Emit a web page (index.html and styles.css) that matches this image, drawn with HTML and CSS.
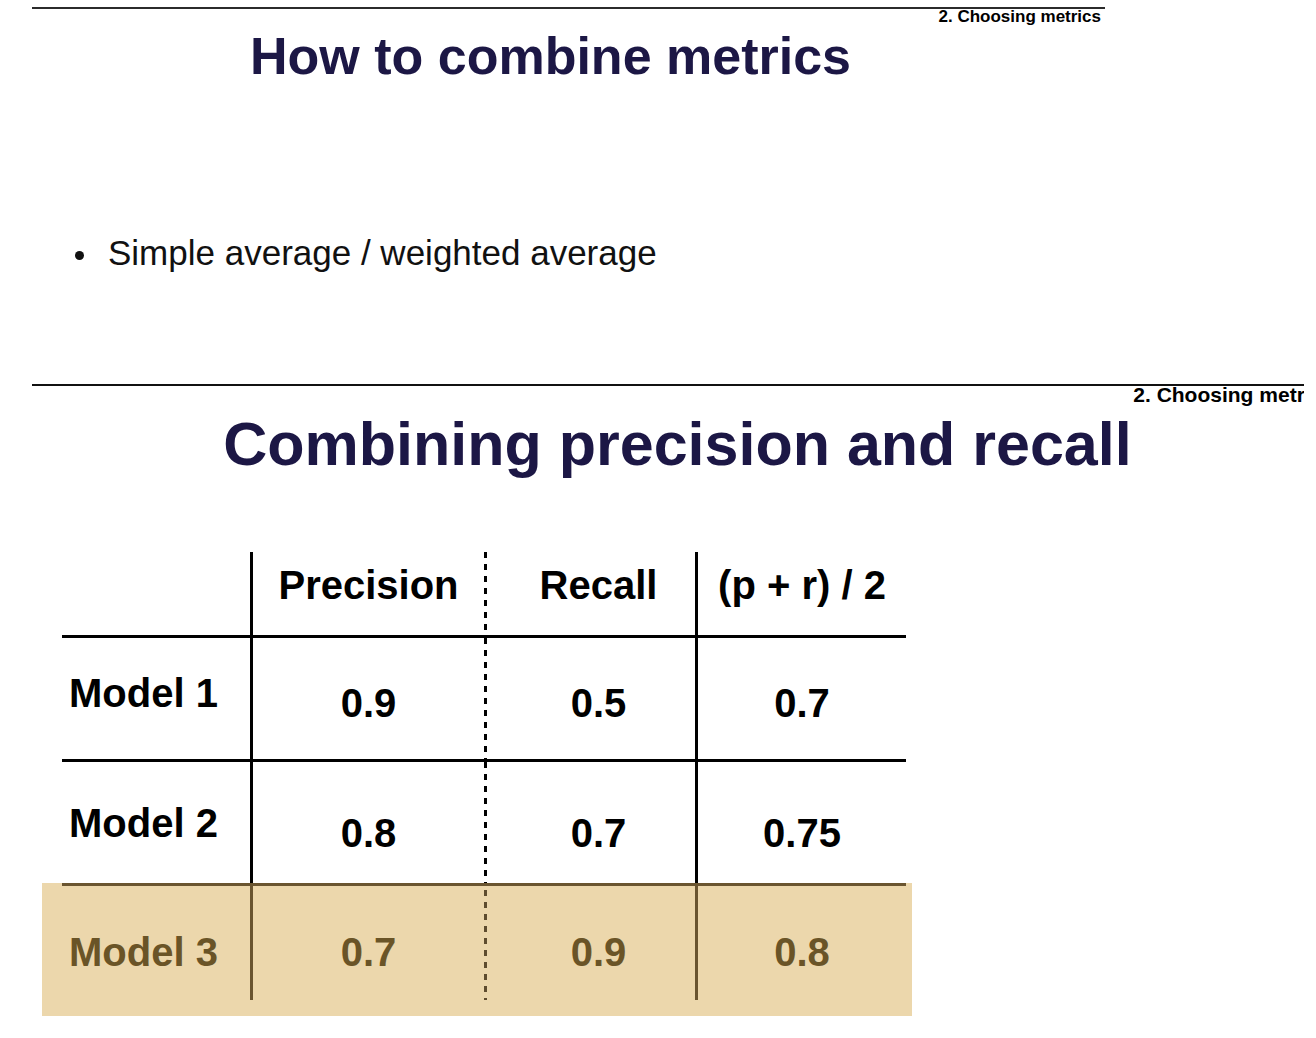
FILE: index.html
```html
<!DOCTYPE html>
<html lang="en">
<head>
<meta charset="utf-8">
<title>Choosing metrics</title>
<link rel="stylesheet" href="styles.css">
</head>
<body>
<div class="page">
  <section class="slide s1">
    <div class="rule"></div>
    <div class="label">2. Choosing metrics</div>
    <h1 class="title">How to combine metrics</h1>
    <ul class="bullets">
      <li>Simple average / weighted average</li>
    </ul>
  </section>

  <div class="frame">
    <section class="slide s2">
      <div class="rule"></div>
      <div class="label">2. Choosing metrics</div>
      <h1 class="title">Combining precision and recall</h1>

      <div class="table">
        <div class="row head">
          <div class="cell c1"></div>
          <div class="cell c2">Precision</div>
          <div class="cell c3">Recall</div>
          <div class="cell c4">(p + r) / 2</div>
        </div>
        <div class="row r1">
          <div class="cell c1">Model 1</div>
          <div class="cell c2">0.9</div>
          <div class="cell c3">0.5</div>
          <div class="cell c4">0.7</div>
        </div>
        <div class="row r2">
          <div class="cell c1">Model 2</div>
          <div class="cell c2">0.8</div>
          <div class="cell c3">0.7</div>
          <div class="cell c4">0.75</div>
        </div>
        <div class="highlight">
          <div class="row r3">
            <div class="cell c1">Model 3</div>
            <div class="cell c2">0.7</div>
            <div class="cell c3">0.9</div>
            <div class="cell c4">0.8</div>
          </div>
        </div>
      </div>
    </section>
  </div>
</div>
</body>
</html>
```

FILE: styles.css
```css
html, body {
  margin: 0;
  padding: 0;
  background: #ffffff;
  overflow: hidden;
}

body {
  font-family: "Liberation Sans", Arial, sans-serif;
  color: #000;
}

.page {
  width: 1316px;
  height: 1038px;
  overflow: hidden;
}

.slide {
  box-sizing: border-box;
}

/* ---------- slide 1 ---------- */
.s1 {
  margin-left: 32px;
  width: 1073px;
  height: 384px;
  padding-top: 7px;
}

.s1 .rule {
  height: 2px;
  background: #2b2b2b;
}

.label {
  font-weight: 700;
  text-align: right;
  white-space: nowrap;
}

.s1 .label {
  font-size: 17px;
  line-height: 16px;
  padding-right: 4px;
}

.title {
  margin: 0;
  font-weight: 700;
  color: #1c1745;
  white-space: nowrap;
  text-align: center;
}

.s1 .title {
  width: 1037px;
  font-size: 52px;
  line-height: 62px;
}

.bullets {
  list-style: none;
  margin: 146px 0 0 0;
  padding: 0 0 0 76px;
  font-size: 35px;
  line-height: 40px;
  color: #111;
}

.bullets li {
  position: relative;
}

.bullets li::before {
  content: "";
  position: absolute;
  left: -33px;
  top: 18px;
  width: 9px;
  height: 9px;
  border-radius: 50%;
  background: #111;
}

/* ---------- slide 2 ---------- */
.frame {
  margin-left: 32px;
  width: 1272px;
  overflow: hidden;
}

.s2 {
  width: 1310px;
}

.s2 .rule {
  height: 2px;
  background: #111;
}

.s2 .label {
  font-size: 21px;
  line-height: 18px;
  padding-right: 8px;
}

.s2 .title {
  width: 1291px;
  margin-top: 5px;
  font-size: 61px;
  line-height: 70px;
}

/* ---------- table ---------- */
.table {
  margin-top: 73px;
  margin-left: 30px;
  width: 844px;
}

.row {
  display: grid;
  grid-template-columns: 188px 234px 211px 211px;
  box-sizing: border-box;
  font-size: 40px;
  line-height: 46px;
  font-weight: 700;
}

.cell {
  box-sizing: border-box;
  white-space: nowrap;
  text-align: center;
}

.cell.c1 {
  text-align: left;
  padding-left: 7px;
}

.cell.c2,
.cell.c4 {
  border-left: 3px solid #000;
}

.cell.c3 {
  padding-left: 18px;
  background-image: linear-gradient(#000 50%, transparent 50%);
  background-size: 3px 12px;
  background-repeat: repeat-y;
  background-position: 0 0;
}

.head {
  height: 86px;
  border-bottom: 3px solid #000;
}

.head .cell {
  padding-top: 10px;
}

.r1 {
  height: 124px;
  border-bottom: 3px solid #000;
}

.r1 .c1 { padding-top: 32px; }
.r1 .c2, .r1 .c3, .r1 .c4 { padding-top: 42px; }

.r2 {
  height: 121px;
}

.r2 .c1 { padding-top: 38px; }
.r2 .c2, .r2 .c3, .r2 .c4 { padding-top: 48px; }

.highlight {
  margin-left: -20px;
  width: 870px;
  box-sizing: border-box;
  padding: 0 6px 16px 20px;
  background: #ecd7ac;
}

.r3 {
  height: 117px;
  border-top: 3px solid #6a5530;
  color: #6a5427;
}

.r3 .cell {
  padding-top: 43px;
}

.r3 .cell.c2,
.r3 .cell.c4 {
  border-left-color: #6a5530;
}

.r3 .cell.c3 {
  background-image: linear-gradient(#5e4c2e 50%, transparent 50%);
  background-size: 3px 12px;
  background-position: 0 4px;
  background-repeat: repeat-y;
}
```
